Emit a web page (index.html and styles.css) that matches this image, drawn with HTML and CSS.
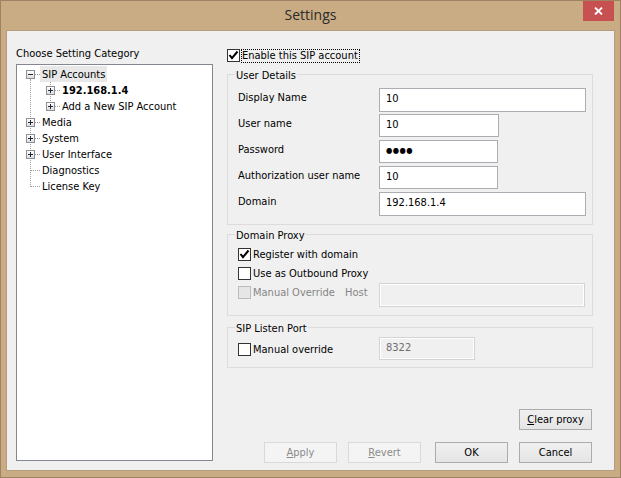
FILE: index.html
```html
<!DOCTYPE html>
<html>
<head>
<meta charset="utf-8">
<title>Settings</title>
<link rel="stylesheet" href="styles.css">
</head>
<body>
<div class="window">
  <div class="titlebar">
    <span class="title">Settings</span>
    <div class="close"><svg width="9" height="8" viewBox="0 0 9 8"><path d="M1 0.5 L8 7.5 M8 0.5 L1 7.5" stroke="#fff" stroke-width="1.8" fill="none"/></svg></div>
  </div>
  <div class="client">
    <div class="leftcol">
      <div class="caption">Choose Setting Category</div>
      <div class="tree">
        <span class="vline v0"></span>
        <span class="vline v1"></span>
        <div class="row l0"><span class="exp"></span><span class="dash"></span><span class="lbl sel">SIP Accounts</span></div>
        <div class="row l1"><span class="exp plus"></span><span class="dash"></span><span class="lbl bold">192.168.1.4</span></div>
        <div class="row l1"><span class="exp plus"></span><span class="dash"></span><span class="lbl">Add a New SIP Account</span></div>
        <div class="row l0"><span class="exp plus"></span><span class="dash"></span><span class="lbl">Media</span></div>
        <div class="row l0"><span class="exp plus"></span><span class="dash"></span><span class="lbl">System</span></div>
        <div class="row l0"><span class="exp plus"></span><span class="dash"></span><span class="lbl">User Interface</span></div>
        <div class="row leaf"><span class="dash long"></span><span class="lbl">Diagnostics</span></div>
        <div class="row leaf"><span class="dash long"></span><span class="lbl">License Key</span></div>
      </div>
    </div>
    <div class="rightcol">
      <div class="check enable">
        <span class="box"><svg width="11" height="11" viewBox="0 0 11 11"><path d="M1.5 5 L4 8.2 L9.5 1.5" stroke="#000" stroke-width="2" fill="none"/></svg></span>
        <span class="focus">Enable this SIP account</span>
      </div>
      <fieldset class="group details">
        <legend>User Details</legend>
        <div class="form">
          <span class="flabel">Display Name</span><div class="field h24 w207">10</div>
          <span class="flabel">User name</span><div class="field w120">10</div>
          <span class="flabel">Password</span><div class="field w119 dots">●●●●</div>
          <span class="flabel">Authorization user name</span><div class="field w119">10</div>
          <span class="flabel">Domain</span><div class="field h24 w207">192.168.1.4</div>
        </div>
      </fieldset>
      <fieldset class="group proxy">
        <legend>Domain Proxy</legend>
        <div class="inner">
          <div class="check">
            <span class="box"><svg width="11" height="11" viewBox="0 0 11 11"><path d="M1.5 5 L4 8.2 L9.5 1.5" stroke="#000" stroke-width="2" fill="none"/></svg></span>
            <span class="ctext">Register with domain</span>
          </div>
          <div class="check second">
            <span class="box"></span>
            <span class="ctext">Use as Outbound Proxy</span>
          </div>
          <div class="hostrow">
            <div class="check">
              <span class="box dis"></span>
              <span class="ctext distext">Manual Override</span>
            </div>
            <span class="host distext">Host</span>
            <div class="field disfield h24 w206"></div>
          </div>
        </div>
      </fieldset>
      <fieldset class="group listen">
        <legend>SIP Listen Port</legend>
        <div class="inner">
          <div class="portrow">
            <div class="check">
              <span class="box"></span>
              <span class="ctext">Manual override</span>
            </div>
            <div class="field disfield w96">8322</div>
          </div>
        </div>
      </fieldset>
      <div class="spacer"></div>
      <button class="btn clear"><u>C</u>lear proxy</button>
      <div class="buttons">
        <button class="btn dis"><u>A</u>pply</button>
        <button class="btn dis revert"><u>R</u>evert</button>
        <button class="btn ok">OK</button>
        <button class="btn cancel">Cancel</button>
      </div>
    </div>
  </div>
</div>
</body>
</html>
```
FILE: styles.css
```css
* { box-sizing: border-box; }
html, body { margin: 0; padding: 0; }
body {
  width: 621px;
  height: 478px;
  overflow: hidden;
  background: #c9ab84;
  font-family: "DejaVu Sans Condensed", "DejaVu Sans", sans-serif;
  font-size: 11px;
  color: #000;
}
.window {
  position: relative;
  width: 621px;
  height: 478px;
  border: 1px solid #9d8263;
  background: #c9ab84;
  padding: 0 6px 7px;
  display: flex;
  flex-direction: column;
}
.titlebar {
  height: 30px;
  flex: none;
  text-align: center;
}
.title {
  font-family: "Open Sans", sans-serif;
  font-size: 14px;
  line-height: 27px;
  color: #2b2b2b;
}
.close {
  position: absolute;
  top: 0;
  right: 6px;
  width: 31px;
  height: 20px;
  background: #c75050;
  display: flex;
  align-items: center;
  justify-content: center;
}
.client {
  flex: 1;
  background: #f0f0f0;
  display: flex;
  gap: 14px;
  padding: 0 21px 0 9px;
  box-shadow: 0 0 0 1px #b59c7a;
}
.leftcol {
  width: 197px;
  flex: none;
  display: flex;
  flex-direction: column;
  padding: 16px 0 9px;
}
.caption {
  line-height: 13px;
  margin-bottom: 4px;
}
.tree {
  flex: 1;
  position: relative;
  background: #fff;
  border: 1px solid #828790;
  padding-top: 1px;
}
.vline {
  position: absolute;
  width: 0;
  border-left: 1px dotted #a0a0a0;
}
.v0 { left: 13px; top: 14px; height: 108px; }
.v1 { left: 33px; top: 17px; height: 25px; }
.row {
  display: flex;
  align-items: flex-start;
  height: 16px;
}
.row.l0 { padding-left: 9px; }
.row.l1 { padding-left: 29px; }
.row.leaf { padding-left: 13px; }
.exp {
  position: relative;
  flex: none;
  width: 9px;
  height: 9px;
  margin-top: 4px;
  border: 1px solid #8e8f93;
  background: linear-gradient(#ffffff, #dedede);
}
.exp::before {
  content: "";
  position: absolute;
  left: 1px;
  top: 3px;
  width: 5px;
  height: 1px;
  background: #1f2a36;
}
.exp.plus::after {
  content: "";
  position: absolute;
  left: 3px;
  top: 1px;
  width: 1px;
  height: 5px;
  background: #1f2a36;
}
.dash {
  flex: none;
  width: 5px;
  height: 0;
  margin-top: 8px;
  border-top: 1px dotted #a0a0a0;
}
.dash.long { width: 10px; }
.lbl {
  height: 16px;
  line-height: 18px;
  padding: 0 2px;
  white-space: nowrap;
}
.lbl.sel { background: #e8e8e8; }
.lbl.bold { font-weight: bold; }

.rightcol {
  width: 366px;
  flex: none;
  display: flex;
  flex-direction: column;
  padding: 18px 0 7px;
}
.check {
  display: flex;
  align-items: flex-start;
}
.box {
  flex: none;
  width: 13px;
  height: 13px;
  border: 1px solid #333;
  background: #fff;
  display: flex;
  align-items: center;
  justify-content: center;
}
.box.dis {
  border-color: #bcbcbc;
  background: #e6e6e6;
}
.focus {
  margin-left: 1px;
  border: 1px dotted #000;
  line-height: 12px;
  padding: 0 1px 0 0;
  white-space: nowrap;
}
.ctext {
  margin-left: 2px;
  line-height: 13px;
  white-space: nowrap;
}
.distext { color: #858585; }

.group {
  margin: 0;
  padding: 0;
  min-width: 0;
  border: 1px solid #dcdcdc;
}
.group legend {
  margin-left: 7px;
  padding: 2px 1px 0;
  line-height: 13px;
}
.details { margin-top: 4px; }
.proxy { margin-top: 2px; }
.listen { margin-top: 4px; }
.form {
  display: grid;
  grid-template-columns: 141px auto;
  grid-auto-rows: 24px;
  row-gap: 2px;
  align-items: start;
  padding: 6px 0 8px 10px;
}
.flabel {
  margin-top: 3px;
  line-height: 13px;
  white-space: nowrap;
}
.field {
  height: 23px;
  border: 1px solid #abadb3;
  background: #fff;
  padding: 1px 6px 0;
  line-height: 17px;
  white-space: nowrap;
}
.field.h24 { height: 24px; }
.w207 { width: 207px; }
.w206 { width: 206px; }
.w120 { width: 120px; }
.w119 { width: 119px; }
.w96 { width: 96px; }
.field.dots {
  font-size: 8px;
  letter-spacing: 0.5px;
}
.field.disfield {
  border-color: #d4d4d4;
  background: #f0f0f0;
  box-shadow: inset 0 0 0 1px #fff;
  color: #6d6d6d;
}
.proxy .inner { padding: 6px 0 8px 10px; }
.check.second { margin-top: 6px; }
.hostrow {
  display: grid;
  grid-template-columns: 107px 34px 206px;
  align-items: start;
  margin-top: 3px;
}
.hostrow .check { margin-top: 3px; }
.host {
  margin-top: 3px;
  line-height: 13px;
}
.listen .inner { padding: 2px 0 7px 10px; }
.portrow {
  display: grid;
  grid-template-columns: 141px 96px;
  align-items: start;
}
.portrow .check { margin-top: 6px; }
.spacer { flex: 1; }
.btn {
  width: 73px;
  height: 21px;
  padding: 0;
  margin: 0;
  border: 1px solid #acacac;
  border-radius: 0;
  background: linear-gradient(#f0f0f0, #e5e5e5);
  font-family: inherit;
  font-size: 11px;
  line-height: 19px;
  color: #000;
  text-align: center;
}
.btn.dis {
  border-color: #d9d9d9;
  background: #f4f4f4;
  color: #8a8a8a;
}
.btn.clear {
  align-self: flex-end;
  margin-right: 1px;
}
.buttons {
  display: flex;
  justify-content: flex-end;
  margin-top: 12px;
  padding-right: 1px;
}
.btn.revert { margin-left: 11px; }
.btn.ok { margin-left: 14px; }
.btn.cancel { margin-left: 11px; }
```
